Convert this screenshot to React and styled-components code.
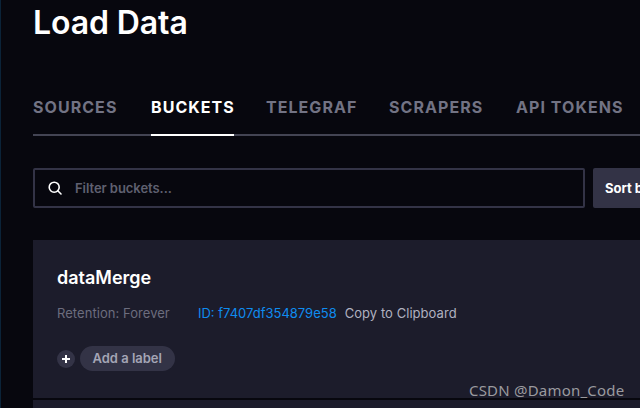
import React from "react";
import styled, { createGlobalStyle } from "styled-components";

const Global = createGlobalStyle`
  html, body { margin: 0; padding: 0; background: #07070e; }
  #root { width: 640px; height: 408px; overflow: hidden; }
`;

const Page = styled.div`
  position: relative;
  width: 640px;
  height: 408px;
  overflow: hidden;
  box-sizing: border-box;
  background: #07070e;
  border-left: 1px solid #0b2338;
  padding: 0 0 0 32px;
  font-family: Inter, "Liberation Sans", sans-serif;
`;

const Title = styled.h1`
  margin: 0;
  height: 48px;
  line-height: 45px;
  font-size: 32px;
  font-weight: 600;
  letter-spacing: -0.1px;
  color: #fff;
`;

const Tabs = styled.nav`
  display: flex;
  gap: 32px;
  margin-top: 35px;
  height: 51px;
  width: 640px;
  border-bottom: 2px solid #434453;
  box-sizing: content-box;
`;

const Tab = styled.div`
  flex: none;
  width: ${(p) => p.$width}px;
  height: 51px;
  box-sizing: content-box;
  line-height: 48px;
  font-size: 16px;
  font-weight: 700;
  letter-spacing: 1.05px;
  white-space: nowrap;
  color: ${(p) => (p.$active ? "#fff" : "#727384")};
  border-bottom: 2px solid ${(p) => (p.$active ? "#fff" : "transparent")};
`;

const Toolbar = styled.div`
  display: flex;
  gap: 8px;
  margin-top: 32px;
  height: 40px;
  width: 700px;
`;

const Filter = styled.div`
  display: flex;
  align-items: center;
  box-sizing: border-box;
  width: 552px;
  height: 40px;
  padding-left: 13px;
  gap: 13px;
  border: 2px solid #333346;
  border-radius: 2px;
  background: #07070e;
  color: #fff;
`;

const Placeholder = styled.span`
  font-size: 13px;
  font-weight: 600;
  letter-spacing: -0.05px;
  color: #5f6070;
`;

const SortButton = styled.div`
  display: flex;
  align-items: center;
  box-sizing: border-box;
  width: 120px;
  height: 40px;
  padding-left: 12px;
  border-radius: 2px;
  background: #333346;
  color: #fff;
  font-size: 13px;
  font-weight: 700;
  white-space: nowrap;
`;

const Card = styled.section`
  margin-top: 32px;
  width: 640px;
  height: 158px;
  box-sizing: border-box;
  padding: 24px;
  background: #1c1c2b;
`;

const NextCard = styled.div`
  margin-top: 2px;
  width: 640px;
  height: 20px;
  background: #1c1c2b;
`;

const CardName = styled.div`
  font-size: 18px;
  line-height: 28px;
  font-weight: 600;
  color: #fff;
`;

const Meta = styled.div`
  display: flex;
  margin-top: 11px;
  height: 20px;
  line-height: 20px;
  font-size: 13px;
  white-space: nowrap;
`;

const Retention = styled.span`
  width: 141px;
  letter-spacing: 0.05px;
  color: #6c6d7e;
`;

const BucketId = styled.span`
  color: #0f8cf0;
  margin-right: 8px;
`;

const Copy = styled.span`
  letter-spacing: 0.05px;
  color: #b0b1c0;
`;

const Labels = styled.div`
  display: flex;
  align-items: center;
  gap: 5px;
  margin-top: 23px;
`;

const PlusBadge = styled.div`
  display: flex;
  align-items: center;
  justify-content: center;
  width: 18px;
  height: 18px;
  border-radius: 50%;
  background: #333346;
`;

const LabelPill = styled.div`
  box-sizing: border-box;
  width: 95px;
  height: 25px;
  line-height: 25px;
  padding-left: 12.4px;
  border-radius: 13px;
  background: #333346;
  color: #a4a5b5;
  font-size: 13px;
  font-weight: 600;
  white-space: nowrap;
`;

const Watermark = styled.div`
  position: absolute;
  left: 468px;
  top: 380px;
  font-family: "Noto Sans", sans-serif;
  font-size: 15px;
  letter-spacing: 0.2px;
  line-height: 20px;
  color: #9a9a9f;
  white-space: nowrap;
`;

const tabs = [
  { name: "SOURCES", width: 86 },
  { name: "BUCKETS", width: 83, active: true },
  { name: "TELEGRAF", width: 91 },
  { name: "SCRAPERS", width: 95 },
  { name: "API TOKENS", width: 110 },
];

export default function App() {
  return (
    <>
      <Global />
      <Page>
        <Title>Load Data</Title>
        <Tabs>
          {tabs.map((t) => (
            <Tab key={t.name} $width={t.width} $active={t.active}>{t.name}</Tab>
          ))}
        </Tabs>
        <Toolbar>
          <Filter>
            <svg width="14" height="14" viewBox="0 0 14 14" fill="none" stroke="#fff" strokeWidth="1.6" strokeLinecap="round">
              <circle cx="6.2" cy="6.2" r="5" />
              <path d="M9.8 9.8 L13 13" />
            </svg>
            <Placeholder>Filter buckets...</Placeholder>
          </Filter>
          <SortButton>Sort by Name</SortButton>
        </Toolbar>
        <Card>
          <CardName>dataMerge</CardName>
          <Meta>
            <Retention>Retention: Forever</Retention>
            <BucketId>ID: f7407df354879e58</BucketId>
            <Copy>Copy to Clipboard</Copy>
          </Meta>
          <Labels>
            <PlusBadge>
              <svg width="10" height="10" viewBox="0 0 10 10" stroke="#fff" strokeWidth="2">
                <path d="M5 1V9M1 5H9" />
              </svg>
            </PlusBadge>
            <LabelPill>Add a label</LabelPill>
          </Labels>
        </Card>
        <NextCard />
        <Watermark>CSDN @Damon_Code</Watermark>
      </Page>
    </>
  );
}
